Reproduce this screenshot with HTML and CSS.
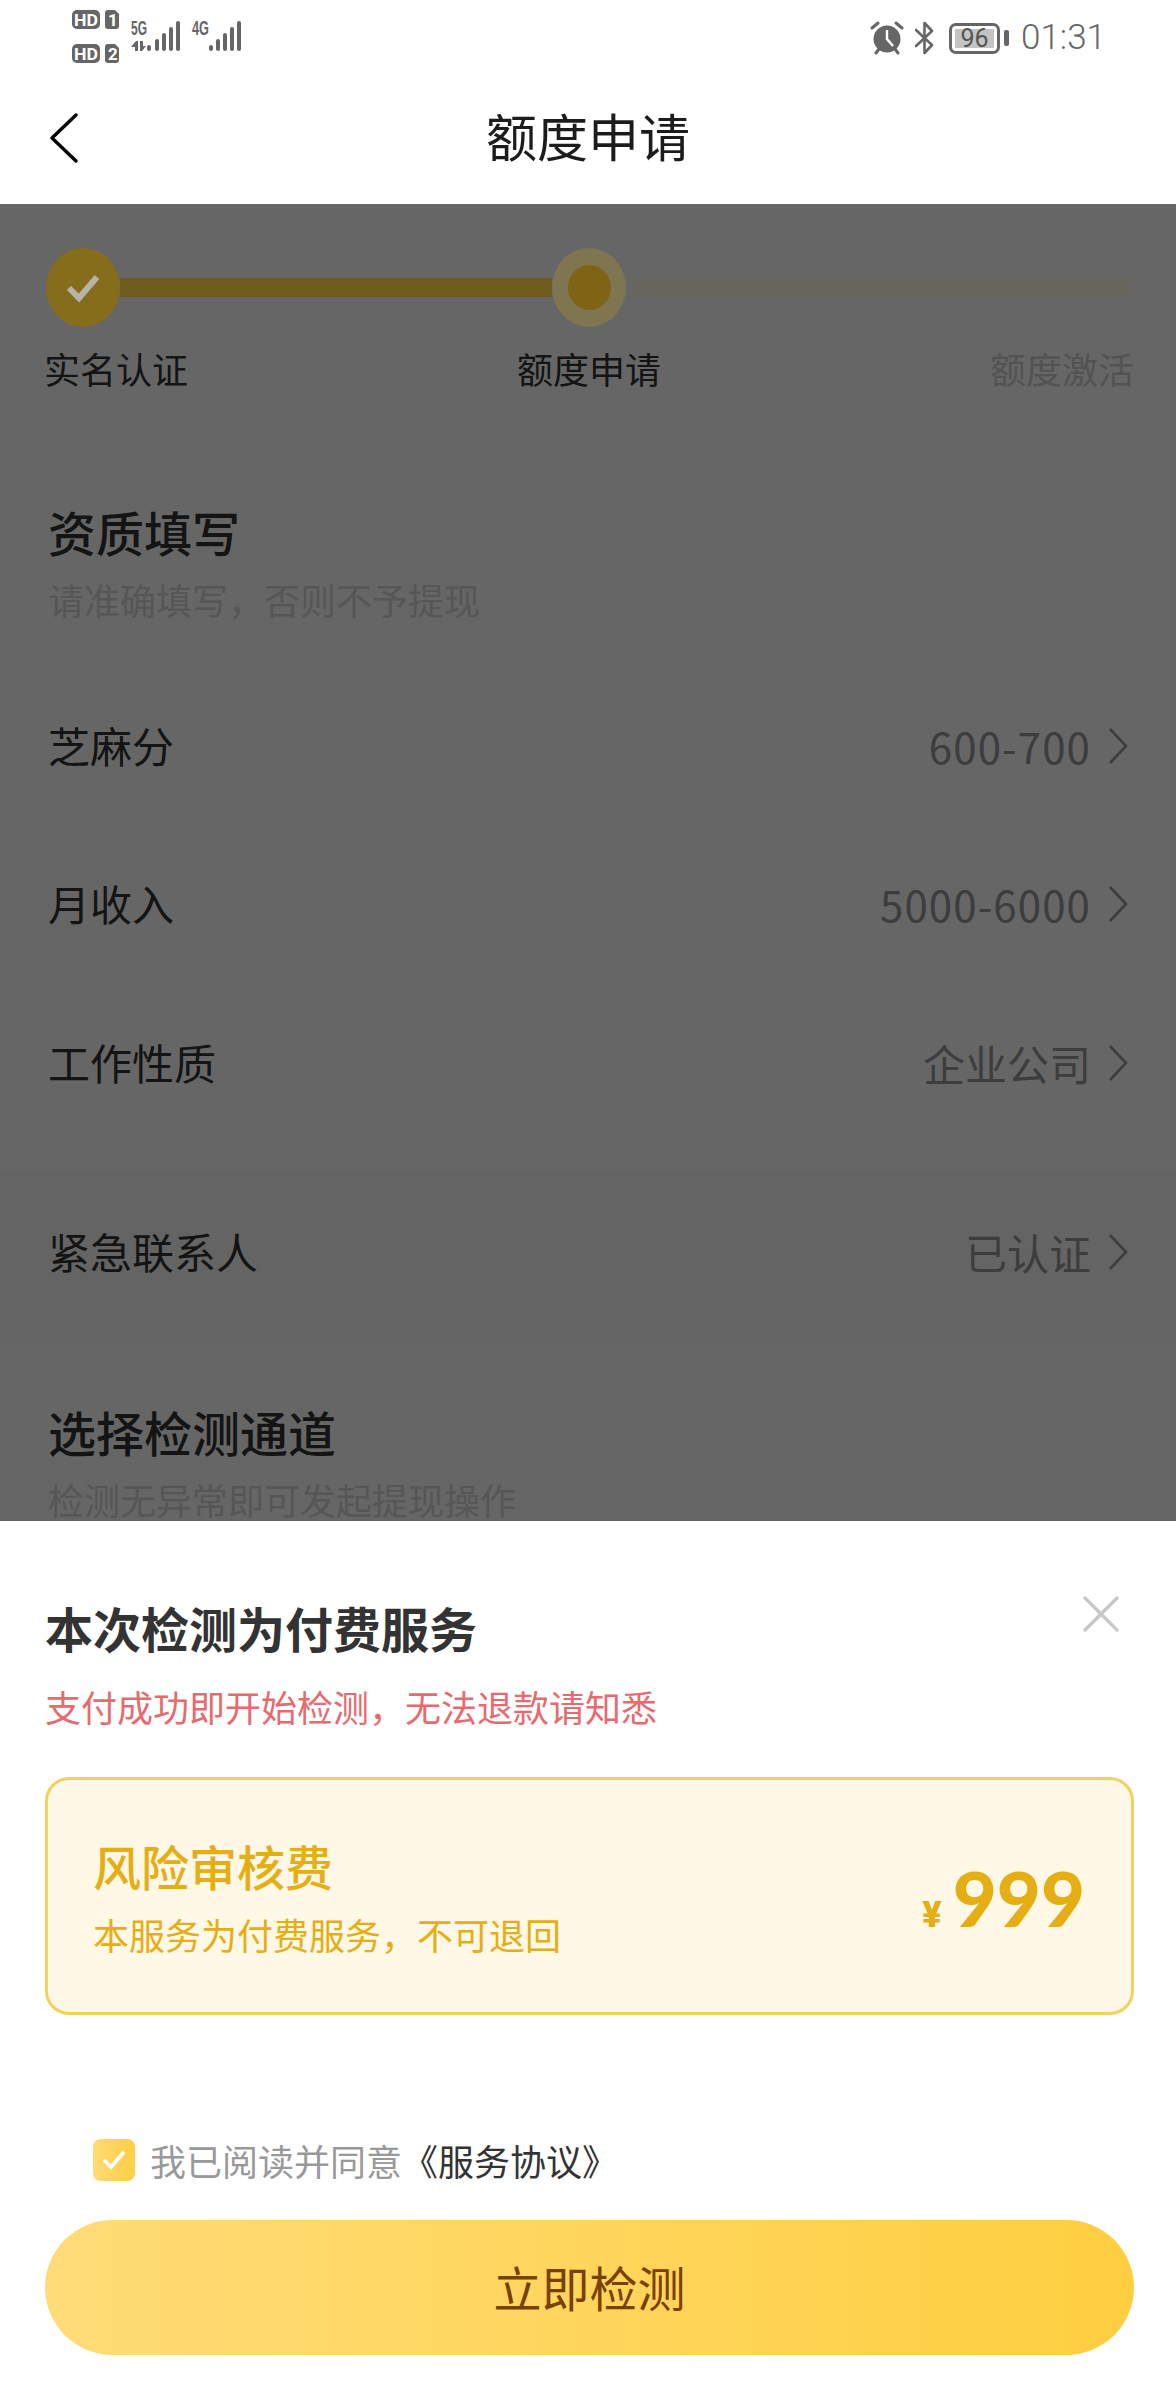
FILE: index.html
```html
<!DOCTYPE html>
<html lang="zh-CN">
<head>
  <meta charset="UTF-8" />
  <meta name="viewport" content="width=device-width, initial-scale=1.0"/>
  <title>额度申请</title>
  <link rel="stylesheet" href="styles.css">
</head>
<body>
  <div class="page">
    <div class="statusbar">
      <svg class="signal" width="180" height="72" viewBox="70 0 180 72">
        <rect x="72" y="10" width="28" height="19" rx="5" fill="#666"/>
        <text x="74" y="26" class="hd" textLength="24" lengthAdjust="spacingAndGlyphs">HD</text>
        <path d="M108 10h7l4 4v12a3 3 0 0 1-3 3h-8a3 3 0 0 1-3-3V13a3 3 0 0 1 3-3z" fill="#666"/>
        <text x="108" y="26" class="hd">1</text>
        <rect x="72" y="44" width="28" height="19" rx="5" fill="#666"/>
        <text x="74" y="60" class="hd" textLength="24" lengthAdjust="spacingAndGlyphs">HD</text>
        <path d="M108 44h7l4 4v12a3 3 0 0 1-3 3h-8a3 3 0 0 1-3-3V47a3 3 0 0 1 3-3z" fill="#666"/>
        <text x="108" y="60" class="hd">2</text>
        <text x="131" y="35" class="net" textLength="16" lengthAdjust="spacingAndGlyphs">5G</text>
        <path d="M131 47l5-6h2v10h-3v-4zM140 41h3v5h3l-4 5h-2z" fill="#666"/>
        <g fill="#666">
          <rect x="147" y="45" width="4" height="6" rx="2"/>
          <rect x="155" y="39" width="4" height="12" rx="2"/>
          <rect x="162" y="33" width="4" height="18" rx="2"/>
          <rect x="169" y="27" width="4" height="24" rx="2"/>
          <rect x="176" y="21" width="4" height="30" rx="2"/>
        </g>
        <text x="192" y="35" class="net" textLength="17" lengthAdjust="spacingAndGlyphs">4G</text>
        <g fill="#666">
          <rect x="209" y="45" width="4" height="6" rx="2"/>
          <rect x="216" y="39" width="4" height="12" rx="2"/>
          <rect x="223" y="33" width="4" height="18" rx="2"/>
          <rect x="230" y="27" width="4" height="24" rx="2"/>
          <rect x="237" y="21" width="4" height="30" rx="2"/>
        </g>
      </svg>
      <div class="status-right">
        <svg width="34" height="34" viewBox="0 0 34 34">
          <circle cx="17" cy="18" r="13.5" fill="#666"/>
          <path d="M17 9v9l6 7" fill="none" stroke="#fff" stroke-width="2.4"/>
          <path d="M2 7l6-5M32 7l-6-5" stroke="#666" stroke-width="3" stroke-linecap="round"/>
          <path d="M6 32l3-4M28 32l-3-4" stroke="#666" stroke-width="3" stroke-linecap="round"/>
        </svg>
        <svg width="20" height="34" viewBox="0 0 20 34">
          <path d="M1 9l16 15-7.500 8V2L17 10 1 25" fill="none" stroke="#666" stroke-width="2.600" stroke-linejoin="round" stroke-linecap="round"/>
        </svg>
        <div class="battery">
          <div class="battery-body"><span class="battery-level">96</span></div>
          <div class="battery-tip"></div>
        </div>
        <span class="clock">01:31</span>
      </div>
    </div>

    <header class="navbar">
      <svg class="back" width="28" height="50" viewBox="0 0 28 50">
        <path d="M26 2L2 25l24 23" fill="none" stroke="#000" stroke-width="3.400" stroke-linecap="round" stroke-linejoin="round"/>
      </svg>
      <h1>额度申请</h1>
    </header>

    <section class="steps">
      <div class="track">
        <div class="dot done">
          <svg width="34" height="30" viewBox="0 0 34 30">
            <path d="M3 15l10 10L31 4" fill="none" stroke="#b6b4aa" stroke-width="6"/>
          </svg>
        </div>
        <div class="bar bar-on"></div>
        <div class="dot current"><div class="dot-inner"></div></div>
        <div class="bar bar-off"></div>
      </div>
      <div class="step-labels">
        <span>实名认证</span>
        <span>额度申请</span>
        <span class="todo">额度激活</span>
      </div>
    </section>

    <section class="form">
      <h2>资质填写</h2>
      <p class="hint">请准确填写，否则不予提现</p>
      <div class="row first-row">
        <span class="row-label">芝麻分</span>
        <span class="row-value num">600-700</span>
        <svg class="arrow" width="20" height="38" viewBox="0 0 20 38"><path d="M2 2l16 17L2 36" fill="none" stroke="#999" stroke-width="2.600"/></svg>
      </div>
      <div class="row">
        <span class="row-label">月收入</span>
        <span class="row-value num">5000-6000</span>
        <svg class="arrow" width="20" height="38" viewBox="0 0 20 38"><path d="M2 2l16 17L2 36" fill="none" stroke="#999" stroke-width="2.600"/></svg>
      </div>
      <div class="row">
        <span class="row-label">工作性质</span>
        <span class="row-value">企业公司</span>
        <svg class="arrow" width="20" height="38" viewBox="0 0 20 38"><path d="M2 2l16 17L2 36" fill="none" stroke="#999" stroke-width="2.600"/></svg>
      </div>
    </section>

    <section class="form contact">
      <div class="row">
        <span class="row-label">紧急联系人</span>
        <span class="row-value">已认证</span>
        <svg class="arrow" width="20" height="38" viewBox="0 0 20 38"><path d="M2 2l16 17L2 36" fill="none" stroke="#999" stroke-width="2.600"/></svg>
      </div>
    </section>

    <section class="form channel">
      <h2>选择检测通道</h2>
      <p class="hint">检测无异常即可发起提现操作</p>
    </section>

    <div class="mask"></div>

    <div class="sheet">
      <svg class="close" width="36" height="36" viewBox="0 0 36 36">
        <path d="M2 2l32 32M34 2L2 34" stroke="#c8c8c8" stroke-width="3.400" stroke-linecap="round"/>
      </svg>
      <h3>本次检测为付费服务</h3>
      <p class="warn">支付成功即开始检测，无法退款请知悉</p>
      <div class="fee">
        <div class="fee-text">
          <div class="fee-title">风险审核费</div>
          <div class="fee-sub">本服务为付费服务，不可退回</div>
        </div>
        <div class="price"><span class="yen">¥</span><span class="amount">999</span></div>
      </div>
      <div class="agree">
        <span class="checkbox">
          <svg width="24" height="20" viewBox="0 0 24 20"><path d="M2 10l7 7L22 2" fill="none" stroke="#fff" stroke-width="3.600"/></svg>
        </span>
        <span class="agree-text">我已阅读并同意<a class="agree-link">《服务协议》</a></span>
      </div>
      <button class="submit">立即检测</button>
    </div>
  </div>
</body>
</html>
```

FILE: styles.css
```css
* {
  box-sizing: border-box;
}
html, body {
  margin: 0;
  padding: 0;
}
body {
  font-family: "Noto Sans CJK SC", "Noto Sans", sans-serif;
  background: #fff;
  color: #333;
}
h1, h2, h3, p {
  margin: 0;
  font-weight: normal;
}
.page {
  position: relative;
  width: 1176px;
  height: 2400px;
  overflow: hidden;
  background: #fff;
}

/* status bar */
.statusbar {
  height: 72px;
  padding: 0 70px;
  display: flex;
  justify-content: space-between;
  align-items: center;
}
.signal text {
  font-family: "Roboto", sans-serif;
  font-weight: 700;
}
.signal .hd {
  font-size: 17px;
  fill: #fff;
}
.signal .net {
  font-family: "Liberation Sans", sans-serif;
  font-size: 20px;
  fill: #666;
}
.status-right {
  display: flex;
  align-items: center;
  padding-top: 4px;
}
.battery {
  display: flex;
  align-items: center;
  gap: 4px;
  margin-left: 14px;
}
.battery-body {
  width: 51px;
  height: 31px;
  border: 3px solid #666;
  border-radius: 7px;
  padding: 3px;
  display: flex;
}
.battery-level {
  flex: 1;
  background: #c4c4c4;
  color: #555;
  font-family: "Roboto", sans-serif;
  font-size: 25px;
  line-height: 19px;
  text-align: center;
}
.battery-tip {
  width: 5px;
  height: 16px;
  background: #666;
  border-radius: 2px;
}
.clock {
  margin-left: 12px;
  font-family: "Roboto", sans-serif;
  font-size: 35px;
  font-weight: 300;
  color: #666;
  line-height: 40px;
}
.status-right svg:first-child {
  margin-right: 11px;
}

/* nav */
.navbar {
  height: 132px;
  padding: 0 48px;
  display: grid;
  grid-template-columns: 1fr auto 1fr;
  align-items: center;
}
.navbar h1 {
  font-size: 51px;
  line-height: 70px;
  padding-bottom: 6px;
  color: #1c1c1c;
}
.back {
  margin-left: 2px;
}

/* stepper, kept above the mask because its colours stay brighter than the dim */
.steps {
  height: 232px;
  padding: 44px 43px 0 46px;
}
.track {
  position: relative;
  z-index: 1;
  display: flex;
  align-items: center;
}
.dot {
  width: 74px;
  height: 79px;
  flex: none;
  border-radius: 50%;
  display: flex;
  align-items: center;
  justify-content: center;
}
.done {
  background: #866d1c;
}
.current {
  background: #7f7550;
}
.dot-inner {
  width: 43px;
  height: 45px;
  border-radius: 50%;
  background: #7f6415;
}
.bar {
  height: 19px;
}
.bar-on {
  width: 432px;
  flex: none;
  background: #6f5c1f;
}
.bar-off {
  flex: 1;
  margin-left: 6px;
  background: #68655d;
}
.step-labels {
  margin: 16px -1px 0 -2px;
  display: flex;
  justify-content: space-between;
  font-size: 36px;
  line-height: 50px;
  color: #333;
}
.todo {
  color: #cfcfcf;
}

/* form rows */
.form {
  padding: 0 48px 0 48px;
}
.form h2 {
  font-size: 48px;
  line-height: 60px;
  font-weight: 500;
  color: #333;
  padding-top: 65px;
  box-sizing: content-box;
}
.form > .hint {
  margin-top: 13px;
  font-size: 36px;
  line-height: 50px;
  color: #d8d8d8;
}
.row {
  height: 158.500px;
  display: flex;
  align-items: center;
}
.first-row {
  margin-top: 41px;
}
.row-label {
  flex: 1;
  font-size: 42px;
  color: #333;
}
.row-value {
  padding-top: 2px;
  font-size: 42px;
  color: #999;
}
.num {
  letter-spacing: 1.100px;
}
.arrow {
  margin: 3px 0 0 17px;
}
.contact {
  margin-top: 31px;
  padding-bottom: 15px;
  background: #fbfbfb;
}
.channel h2 {
  padding-top: 56px;
}

/* mask + sheet */
.mask {
  position: absolute;
  left: 0;
  right: 0;
  top: 204px;
  bottom: 0;
  background: rgba(0, 0, 0, 0.6);
}
.sheet {
  position: absolute;
  left: 0;
  right: 0;
  top: 1521px;
  bottom: 0;
  background: #fff;
  padding: 76px 42px 0 45px;
}
.close {
  position: absolute;
  top: 75px;
  right: 57px;
}
.sheet h3 {
  font-size: 48px;
  line-height: 60px;
  font-weight: 700;
  color: #333;
}
.warn {
  margin-top: 24px;
  font-size: 36px;
  line-height: 50px;
  color: #e8696e;
}
.fee {
  margin-top: 46px;
  height: 238px;
  padding: 0 46px 0 45px;
  background: #fff8e6;
  border: 3px solid #f1d160;
  border-radius: 24px;
  display: flex;
  justify-content: space-between;
  align-items: center;
  color: #e5ae15;
}
.fee-text {
  padding-top: 2px;
}
.fee-title {
  font-size: 48px;
  line-height: 60px;
  font-weight: 500;
}
.fee-sub {
  margin-top: 14px;
  font-size: 36px;
  line-height: 50px;
}
.price {
  display: flex;
  align-items: baseline;
  gap: 11px;
  padding-top: 4px;
}
.yen {
  font-family: "Roboto", sans-serif;
  font-size: 36px;
  font-weight: 900;
}
.amount {
  font-family: "Lato", sans-serif;
  font-size: 76px;
  font-weight: 900;
  line-height: 90px;
}
.agree {
  margin: 124px 0 0 48px;
  height: 42px;
  display: flex;
  align-items: center;
  gap: 15px;
}
.checkbox {
  width: 42px;
  height: 42px;
  border-radius: 8px;
  background: linear-gradient(90deg, #ffdb75, #ffce45);
  display: flex;
  align-items: center;
  justify-content: center;
}
.agree-text {
  font-size: 36px;
  color: #999;
}
.agree-link {
  color: #333;
}
.submit {
  display: block;
  width: 100%;
  height: 135px;
  margin-top: 39px;
  padding: 0 0 4px;
  border: none;
  border-radius: 68px;
  background: linear-gradient(90deg, #ffdc78, #ffce40);
  color: #7a4000;
  font-family: inherit;
  font-size: 48px;
}
```
